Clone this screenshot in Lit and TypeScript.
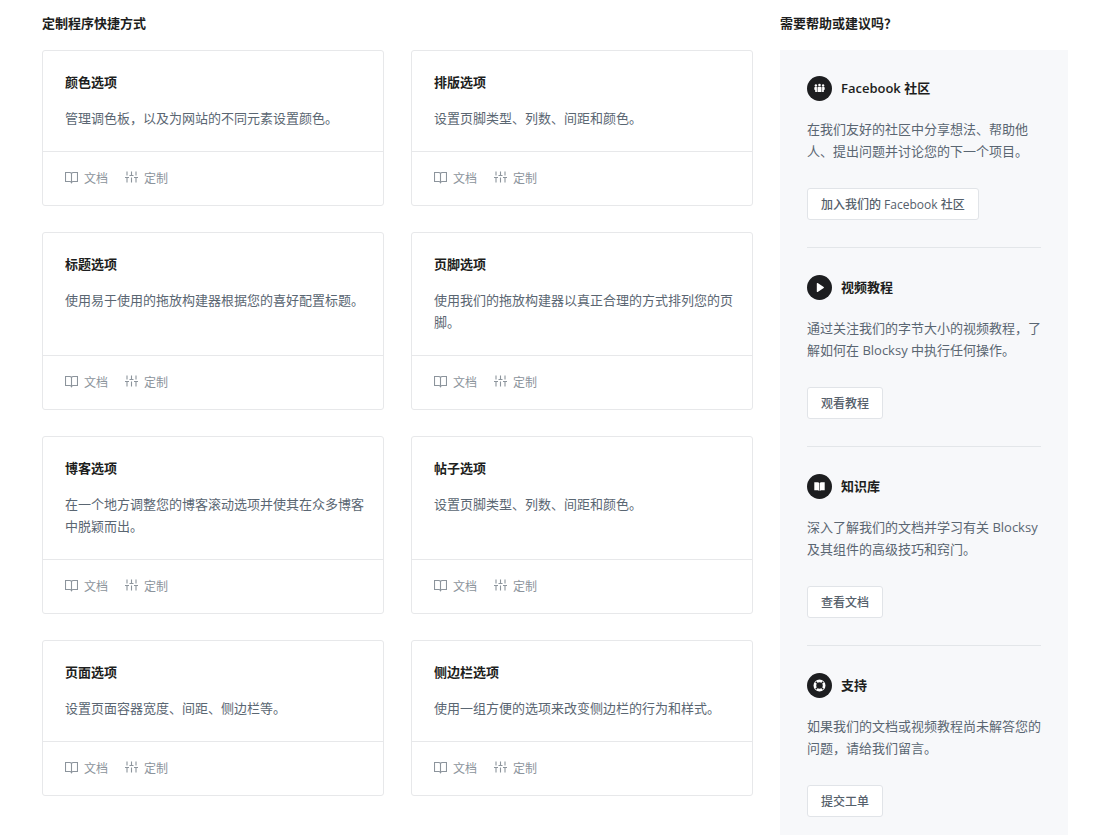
import { LitElement, html, css, svg } from "lit";
import { customElement, property } from "lit/decorators.js";

const bookIcon = html`<svg class="icon" viewBox="0 0 13 13" aria-hidden="true">
  <path d="M6.500 2.500C6.200 1.800 5.500 1.500 4.600 1.500H.5v9h4.300c.9 0 1.400.3 1.700 1 .3-.7.8-1 1.700-1h4.300v-9H8.400c-.9 0-1.600.3-1.900 1zM6.500 2.500v9.500" fill="none" stroke="currentColor" stroke-width="1.100" />
</svg>`;

const slidersIcon = html`<svg class="icon" viewBox="0 0 13 13" aria-hidden="true">
  <path d="M2 .5v4M2 6.500v5M0 6.500h4M6.500 .5v4M6.500 6.500v5M4.500 4.500h4M11 .5v4M11 6.500v5M9 6.500h4" fill="none" stroke="currentColor" stroke-width="1.100" />
</svg>`;

const badges: Record<string, unknown> = {
  community: svg`<g fill="#fff">
    <circle cx="8.900" cy="9.500" r="1.200" /><circle cx="12.500" cy="9" r="1.300" /><circle cx="16.100" cy="9.500" r="1.200" />
    <path d="M7.300 12c0-.6.4-1 1-1h1.600v5H8.200v-1.700c-.6-.2-.9-.5-.9-1zM10.500 11.800c0-.6.4-1 1-1h2c.6 0 1 .4 1 1V16h-4zM15.100 11h1.600c.6 0 1 .4 1 1v1.300c0 .5-.3.800-.9 1V16h-1.700z" />
  </g>`,
  video: svg`<path d="M9.800 8.500c0-.5.500-.8.900-.5l6 4c.4.300.4.800 0 1l-6 4c-.4.300-.9 0-.9-.5z" fill="#fff" />`,
  knowledge: svg`<path d="M7.300 8.300h3.500c.7 0 1.100.3 1.400.8v7.900c-.4-.5-.8-.8-1.500-.8H7.300zM17.700 8.300h-3.500c-.7 0-1.100.3-1.400.8v7.900c.4-.5.8-.8 1.500-.8h3.400z" fill="#fff" />`,
  support: svg`<circle cx="12.500" cy="12.500" r="4.500" fill="none" stroke="#fff" stroke-width="3" />
    <path d="M8.700 8.700l7.600 7.600M16.300 8.700l-7.600 7.600" stroke="#1d1e20" stroke-width="1.300" />
    <circle cx="12.500" cy="12.500" r="3" fill="#1d1e20" />`,
};

interface Shortcut {
  title: string;
  text: string;
}

interface HelpTopic {
  icon: string;
  title: string;
  text: string;
  action: string;
}

const shortcuts: Shortcut[] = [
  { title: "颜色选项", text: "管理调色板，以及为网站的不同元素设置颜色。" },
  { title: "排版选项", text: "设置页脚类型、列数、间距和颜色。" },
  { title: "标题选项", text: "使用易于使用的拖放构建器根据您的喜好配置标题。" },
  { title: "页脚选项", text: "使用我们的拖放构建器以真正合理的方式排列您的页脚。" },
  { title: "博客选项", text: "在一个地方调整您的博客滚动选项并使其在众多博客中脱颖而出。" },
  { title: "帖子选项", text: "设置页脚类型、列数、间距和颜色。" },
  { title: "页面选项", text: "设置页面容器宽度、间距、侧边栏等。" },
  { title: "侧边栏选项", text: "使用一组方便的选项来改变侧边栏的行为和样式。" },
];

const topics: HelpTopic[] = [
  { icon: "community", title: "Facebook 社区", text: "在我们友好的社区中分享想法、帮助他人、提出问题并讨论您的下一个项目。", action: "加入我们的 Facebook 社区" },
  { icon: "video", title: "视频教程", text: "通过关注我们的字节大小的视频教程，了解如何在 Blocksy 中执行任何操作。", action: "观看教程" },
  { icon: "knowledge", title: "知识库", text: "深入了解我们的文档并学习有关 Blocksy 及其组件的高级技巧和窍门。", action: "查看文档" },
  { icon: "support", title: "支持", text: "如果我们的文档或视频教程尚未解答您的问题，请给我们留言。", action: "提交工单" },
];

@customElement("shortcut-card")
export class ShortcutCard extends LitElement {
  @property({ attribute: false }) item!: Shortcut;

  static styles = css`
    :host {
      display: flex;
      flex-direction: column;
      border: 1px solid #e7e8ea;
      border-radius: 3px;
      background: #fff;
    }
    .body {
      flex: 1;
      padding: 21px 19px 22px 22px;
    }
    .title {
      margin: 0 0 15px;
      font-size: 13px;
      line-height: 20px;
      font-weight: 600;
      color: #1d1e20;
    }
    .text {
      margin: 0;
      font-size: 13px;
      line-height: 22px;
      color: #5a6672;
    }
    .links {
      display: flex;
      gap: 17px;
      padding: 17px 22px 16px;
      border-top: 1px solid #e7e8ea;
    }
    .link {
      display: flex;
      align-items: center;
      gap: 6px;
      font-size: 12px;
      line-height: 20px;
      color: #8c949c;
      text-decoration: none;
    }
    .icon {
      width: 13px;
      height: 13px;
      margin-bottom: 3px;
    }
  `;

  render() {
    return html`
      <div class="body">
        <h3 class="title">${this.item.title}</h3>
        <p class="text">${this.item.text}</p>
      </div>
      <div class="links">
        <a class="link" href="#">${bookIcon}<span>文档</span></a>
        <a class="link" href="#">${slidersIcon}<span>定制</span></a>
      </div>
    `;
  }
}

@customElement("help-topic")
export class HelpTopicItem extends LitElement {
  @property({ attribute: false }) item!: HelpTopic;

  static styles = css`
    :host {
      display: block;
    }
    .head {
      display: flex;
      align-items: flex-start;
      gap: 9px;
      margin-bottom: 17px;
    }
    .badge {
      width: 25px;
      height: 25px;
    }
    .title {
      margin: 0;
      font-size: 13px;
      line-height: 24px;
      font-weight: 600;
      color: #1d1e20;
    }
    .text {
      margin: 0 0 26px;
      font-size: 13px;
      line-height: 22px;
      color: #5a6672;
    }
    .action {
      display: block;
      height: 32px;
      padding: 0 13px;
      border: 1px solid #e1e4e8;
      border-radius: 3px;
      background: #fff;
      font-family: inherit;
      font-size: 12px;
      font-weight: 500;
      color: #55606b;
      cursor: pointer;
    }
  `;

  render() {
    return html`
      <div class="head">
        <svg class="badge" viewBox="0 0 25 25" aria-hidden="true">
          <circle cx="12.500" cy="12.500" r="12.500" fill="#1d1e20" />
          ${badges[this.item.icon]}
        </svg>
        <h3 class="title">${this.item.title}</h3>
      </div>
      <p class="text">${this.item.text}</p>
      <button class="action" type="button">${this.item.action}</button>
    `;
  }
}

@customElement("app-root")
export class AppRoot extends LitElement {
  static styles = css`
    :host {
      display: grid;
      grid-template-columns: minmax(0, 1fr) 288px;
      column-gap: 27px;
      padding: 13px 40px 0 42px;
      background: #fff;
      font-family: "Open Sans", "Noto Sans CJK SC", sans-serif;
    }
    .heading {
      margin: 0 0 17px;
      font-size: 13px;
      line-height: 20px;
      font-weight: 600;
      color: #1d1e20;
    }
    .cards {
      display: grid;
      grid-template-columns: repeat(2, minmax(0, 1fr));
      gap: 26px 27px;
    }
    .panel {
      padding: 26px 27px 18px;
      background: #f7f8fa;
    }
    .topic + .topic {
      margin-top: 27px;
      padding-top: 27px;
      border-top: 1px solid #e3e6e9;
    }
  `;

  render() {
    return html`
      <section>
        <h2 class="heading">定制程序快捷方式</h2>
        <div class="cards">
          ${shortcuts.map((item) => html`<shortcut-card .item=${item}></shortcut-card>`)}
        </div>
      </section>
      <aside>
        <h2 class="heading">需要帮助或建议吗？</h2>
        <div class="panel">
          ${topics.map((item) => html`<help-topic class="topic" .item=${item}></help-topic>`)}
        </div>
      </aside>
    `;
  }
}
